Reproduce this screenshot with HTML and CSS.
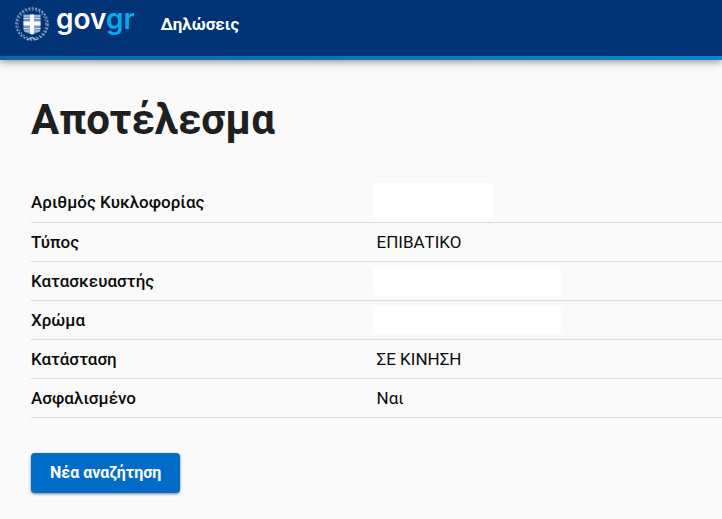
FILE: index.html
```html
<!DOCTYPE html>
<html lang="el">
<head>
<meta charset="UTF-8" />
<meta name="viewport" content="width=device-width, initial-scale=1" />
<title>Αποτέλεσμα - Δηλώσεις</title>
<link rel="stylesheet" href="styles.css">
</head>
<body>

<header class="site-header">
  <a class="logo" href="#">
    <svg class="emblem" viewBox="0 0 36 36" aria-hidden="true">
      <!-- laurel wreath -->
      <g fill="none" stroke="#a9bdd8">
        <circle cx="18" cy="18" r="15.8" stroke-width="2" stroke-dasharray="2.200 1.300" opacity=".7" />
        <circle cx="18" cy="18" r="14" stroke-width="1.600" stroke-dasharray="1.500 1.800" opacity=".6" />
        <path d="M13 34l5-2.500 5 2.500" stroke-width="1.2" />
      </g>
      <!-- shield with cross -->
      <path d="M9.500 8.500h17v15c0 3-4 3.500-8.500 5-4.500-1.500-8.500-2-8.500-5z" fill="#6f94c6" />
      <path d="M9.500 10h17M9.500 12.500h17M9.500 22.500h17M10.500 25h15" stroke="#c9d8ec" stroke-width="1" />
      <path d="M16 8.500h4v7h6.500v4h-6.500v8.300l-2 .7-2-.7v-8.300h-6.500v-4h6.500z" fill="#fff" />
    </svg>
    <span class="wordmark">gov<span class="wordmark-gr">gr</span></span>
  </a>
  <a class="service" href="#">Δηλώσεις</a>
</header>

<main class="content">
  <h1>Αποτέλεσμα</h1>

  <table class="result">
    <tbody>
      <tr>
        <th scope="row">Αριθμός Κυκλοφορίας</th>
        <td class="top"><span class="hidden-value plate"></span></td>
      </tr>
      <tr>
        <th scope="row">Τύπος</th>
        <td>ΕΠΙΒΑΤΙΚΟ</td>
      </tr>
      <tr>
        <th scope="row">Κατασκευαστής</th>
        <td><span class="hidden-value"></span></td>
      </tr>
      <tr>
        <th scope="row">Χρώμα</th>
        <td><span class="hidden-value"></span></td>
      </tr>
      <tr>
        <th scope="row">Κατάσταση</th>
        <td>ΣΕ ΚΙΝΗΣΗ</td>
      </tr>
      <tr>
        <th scope="row">Ασφαλισμένο</th>
        <td>Ναι</td>
      </tr>
    </tbody>
  </table>

  <button class="btn" type="button">Νέα αναζήτηση</button>
</main>

</body>
</html>
```
FILE: styles.css
```css
* {
  box-sizing: border-box;
}
body {
  margin: 0;
  font-family: Roboto, "Liberation Sans", sans-serif;
  font-size: 17px;
  color: #0b0c0c;
  background: #fafafa;
}
.site-header {
  display: flex;
  align-items: flex-start;
  gap: 26px;
  height: 60px;
  padding: 0 14px;
  background: linear-gradient(to right, #1065a5, #0a86cc) bottom / 100% 4px no-repeat #003375;
  box-shadow: 0 1px 8px rgba(0, 0, 0, 0.5);
}
.logo {
  display: flex;
  align-items: flex-start;
  gap: 6px;
  padding-top: 6px;
  text-decoration: none;
}
.emblem {
  width: 36px;
  height: 36px;
}
.wordmark {
  font-family: Inter, sans-serif;
  font-size: 28px;
  font-weight: 600;
  line-height: 26px;
  color: #fff;
}
.wordmark-gr {
  color: #00adef;
}
.service {
  padding-top: 12px;
  font-size: 17px;
  font-weight: 700;
  line-height: 24px;
  color: #fff;
  text-decoration: none;
}
.content {
  padding: 32px 0 24px 31px;
}
h1 {
  margin: 0 0 35px;
  font-size: 42px;
  font-weight: 700;
  line-height: 56px;
  color: #1f1f1f;
}
.result {
  width: 100%;
  border-collapse: collapse;
  table-layout: fixed;
}
.result tr {
  height: 39px;
  border-bottom: 1px solid #dcdcdc;
}
.result th,
.result td {
  width: 50%;
  padding: 0;
  text-align: left;
  line-height: 24px;
}
.result th {
  font-weight: 500;
}
.result td {
  font-weight: 400;
}
.result .top {
  vertical-align: top;
}
/* personal data is blanked out */
.hidden-value {
  display: block;
  width: 188px;
  height: 28px;
  margin-left: -4px;
  background: #fff;
}
.hidden-value.plate {
  width: 120px;
  height: 35px;
}
.btn {
  margin-top: 35px;
  padding: 8px 19px;
  border: 0;
  border-radius: 4px;
  font-family: inherit;
  font-size: 16px;
  font-weight: 700;
  line-height: 24px;
  color: #fff;
  background: #006cc7;
  box-shadow: 0 1px 3px rgba(0, 0, 0, 0.5);
  cursor: pointer;
}
.btn:hover {
  background: #00539a;
}
```
